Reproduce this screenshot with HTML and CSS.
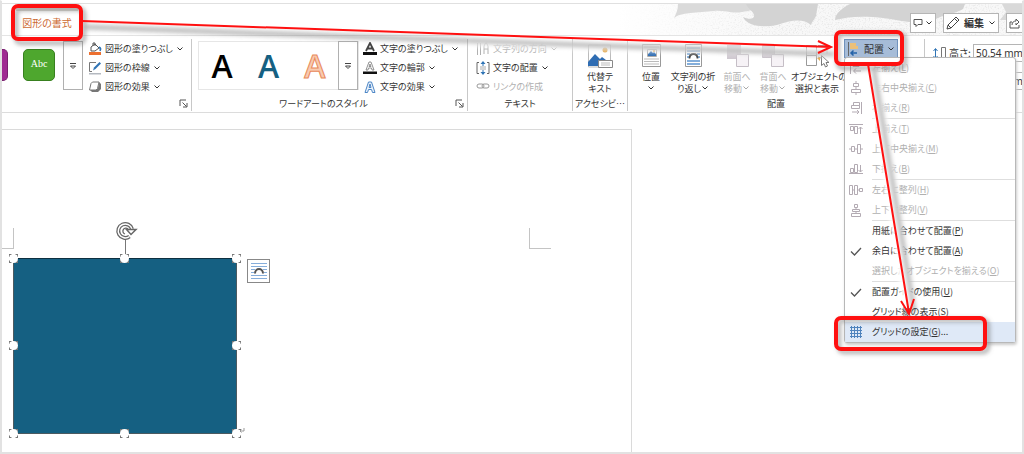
FILE: index.html
```html
<!DOCTYPE html>
<html lang="ja">
<head>
    <meta charset="UTF-8">
    <meta name="viewport" content="width=device-width, initial-scale=1.0">
    <title>図形の書式</title>
    <link rel="stylesheet" href="styles.css">
</head>
<body>

<svg class="defs" aria-hidden="true">
    <symbol id="chevron" viewBox="0 0 8 8"><path d="M1.500 2.500 4 5l2.500-2.500" fill="none" stroke="currentColor"/></symbol>
    <symbol id="more" viewBox="0 0 8 8"><path d="M1 1.500h6M1.500 4h5L4 6.500z" fill="none" stroke="#444"/></symbol>
    <symbol id="launcher" viewBox="0 0 9 9"><path d="M1 7V1h6M3.500 3.500l4 4M8 4v4H4" fill="none" stroke="#555"/></symbol>
    <symbol id="check" viewBox="0 0 14 14"><path d="M2 7.500 5.500 11 12 4" fill="none" stroke="#555" stroke-width="1.300"/></symbol>
</svg>

<div class="app">
    <header class="title-bar">
        <svg class="swoosh" viewBox="0 0 404 31" preserveAspectRatio="xMaxYMin slice" aria-hidden="true">
            <defs>
                <filter id="grain"><feTurbulence type="fractalNoise" baseFrequency="0.700" numOctaves="2"/><feColorMatrix values="0 0 0 0 .6  0 0 0 0 .6  0 0 0 0 .6  0 0 0 1.200 -.58"/></filter>
                <linearGradient id="fade"><stop offset="0" stop-color="#fff"/><stop offset=".4" stop-color="#fff" stop-opacity="0"/></linearGradient>
            </defs>
            <rect width="404" height="31" fill="#f8f8f8"/>
            <rect width="404" height="31" filter="url(#grain)"/>
            <rect width="404" height="31" fill="url(#fade)"/>
            <path d="M60 0h80c-3 6-8 7-16 8-10 2-18-2-28-1-8 1-16 1-24 2-8 1-12 2-16 5 2-4 4-8 4-14z" fill="#dadada"/>
            <path d="M128 0h72l-2 12c-1 3-4 5-5 9-8-7-20-5-34 0-14 3-30 1-34-8 6 3 12 2 11-2-1-4-6-6-8-11z" fill="#d3d3d3"/>
            <path d="M232 0h115l-2 5c-6 4-12 4-18 6-8 3-14 8-26 8-16-1-30-5-46-6-16-1-26 0-38 3 0-6 7-12 15-16z" fill="#d3d3d3"/>
            <path d="M404 0h-20l4 8-6 8h22z" fill="#d9d9d9"/>
        </svg>
        <button class="tab">図形の書式</button>
        <div class="title-actions">
            <button class="outline-btn" aria-label="コメント">
                <svg width="10" height="10" viewBox="0 0 10 10"><path d="M1 1.500h8v5H5L3 8.500v-2H1z" fill="none" stroke="#555"/></svg>
                <svg class="chev"><use href="#chevron"/></svg>
            </button>
            <button class="outline-btn edit">
                <svg width="14" height="14" viewBox="0 0 14 14"><path d="M1 13l1-4 8-8 3 3-8 8zM8.500 2.500l3 3M2 9l3 3" fill="none" stroke="#444"/></svg>
                編集
                <svg class="chev"><use href="#chevron"/></svg>
            </button>
            <button class="outline-btn share" aria-label="共有">
                <svg width="11" height="11" viewBox="0 0 11 11"><path d="M3 4H1v6h9V7M3 7c0-3 2-4 4-4V1l3 3-3 3V5" fill="none" stroke="#555"/></svg>
            </button>
        </div>
    </header>

    <div class="ribbon">
        <section class="group styles">
            <div class="group-body">
                <span class="swatch purple"></span>
                <span class="swatch green">Abc</span>
                <button class="more" aria-label="図形のスタイル"><svg><use href="#more"/></svg></button>
                <div class="commands">
                    <button class="cmd">
                        <svg class="icon" viewBox="0 0 14 14"><path d="M3 5l4-3 4 4-4 3H3zM5 4V1h2v3" fill="#fff" stroke="#555"/><path d="M11 5c2 1 2 2 1 4" fill="none" stroke="#2f74b5" stroke-width="1.500"/><path d="M1 10h12v3H1z" fill="#ed7030"/></svg>
                        図形の塗りつぶし<svg class="chev"><use href="#chevron"/></svg>
                    </button>
                    <button class="cmd">
                        <svg class="icon" viewBox="0 0 14 14"><path d="M8 1.500H1.500v9H4" fill="none" stroke="#777"/><path d="M5 9.500l1-3L11.500 1 13 2.500 7.500 8z" fill="#2f74b5"/><path d="M1 12h12v1.500H1z" fill="#b4b9c0"/></svg>
                        図形の枠線<svg class="chev"><use href="#chevron"/></svg>
                    </button>
                    <button class="cmd">
                        <svg class="icon" viewBox="0 0 14 14"><path d="M2 10l2 2h6l3-3V4l-2-2-1 6-2 2z" fill="#777"/><path d="M4.500 2H11L9.500 8.500 8 10H1.500L3 3.500z" fill="#fff" stroke="#777"/></svg>
                        図形の効果<svg class="chev"><use href="#chevron"/></svg>
                    </button>
                </div>
            </div>
            <div class="group-foot"><span></span><button class="launcher" aria-label="図形の詳細"><svg><use href="#launcher"/></svg></button></div>
        </section>

        <section class="group wordart">
            <div class="group-body">
                <div class="gallery">
                    <span class="art black">A</span>
                    <span class="art blue">A</span>
                    <span class="art orange">A</span>
                    <button class="more" aria-label="その他のスタイル"><svg><use href="#more"/></svg></button>
                </div>
                <div class="commands">
                    <button class="cmd">
                        <svg class="icon" viewBox="0 0 14 14"><path d="M3 9l4-8 4 8M4.500 6.500h5" fill="none" stroke="#444" stroke-width="1.800"/><path d="M0 10h14v3H0z" fill="#111"/></svg>
                        文字の塗りつぶし<svg class="chev"><use href="#chevron"/></svg>
                    </button>
                    <button class="cmd">
                        <svg class="icon" viewBox="0 0 14 14"><path d="M3 9l3-8h2l3 8H9L8.500 7h-3L5 9zM6 5.500h2L7 3z" fill="#fff" stroke="#777" stroke-width=".8"/><path d="M0 10.500h14v2.500H0z" fill="#111"/></svg>
                        文字の輪郭<svg class="chev"><use href="#chevron"/></svg>
                    </button>
                    <button class="cmd">
                        <svg class="icon" viewBox="0 0 14 14"><path d="M2 12.500L5.500 2h3L12 12.500H9.500l-1-3h-3l-1 3zM6 7.500h2L7 4z" fill="#eaf2fb" stroke="#4c86c6"/></svg>
                        文字の効果<svg class="chev"><use href="#chevron"/></svg>
                    </button>
                </div>
            </div>
            <div class="group-foot"><span>ワードアートのスタイル</span><button class="launcher" aria-label="文字の詳細"><svg><use href="#launcher"/></svg></button></div>
        </section>

        <section class="group text">
            <div class="group-body">
                <div class="commands">
                    <button class="cmd" disabled>
                        <svg class="icon" viewBox="0 0 14 14"><path d="M1.500 1v12M4.500 1v12M8 12V4l1.500-3h1L12 4v8M8 7h4" fill="none" stroke="currentColor"/></svg>
                        文字列の方向<svg class="chev"><use href="#chevron"/></svg>
                    </button>
                    <button class="cmd">
                        <svg class="icon" viewBox="0 0 14 14"><path d="M3 1.500H1v11h2M11 1.500h2v11h-2" fill="none" stroke="#666"/><path d="M7 0l2.500 3h-5zM7 14l2.500-3h-5zM6.500 3h1v2h-1zM6.500 9h1v2h-1z" fill="#2f74b5"/><path d="M4 6h6M4 8h6" stroke="#aaa"/></svg>
                        文字の配置<svg class="chev"><use href="#chevron"/></svg>
                    </button>
                    <button class="cmd" disabled>
                        <svg class="icon" viewBox="0 0 14 14"><rect x="1" y="4" width="7" height="4" rx="2" fill="none" stroke="#999"/><rect x="6" y="4" width="7" height="4" rx="2" fill="none" stroke="#999"/></svg>
                        リンクの作成
                    </button>
                </div>
            </div>
            <div class="group-foot"><span>テキスト</span></div>
        </section>

        <section class="group access">
            <div class="group-body">
                <button class="big">
                    <svg viewBox="0 0 26 26"><path d="M1.500 2h22v22h-22z" fill="#fff" stroke="#bbb"/><circle cx="18" cy="7" r="2.500" fill="#e3a23c"/><path d="M1 23v-4l7-8 5 5 2-2 4 3v6z" fill="#2f6db3"/><path d="M11.500 17.500h14v7h-14z" fill="#fff" stroke="#888"/><path d="M14 20h9M14 22h9" stroke="#bbb"/></svg>
                    代替テ<br>キスト
                </button>
            </div>
            <div class="group-foot"><span>アクセシビ…</span></div>
        </section>

        <section class="group arrange">
            <div class="group-body">
                <button class="big narrow">
                    <svg viewBox="0 0 26 26"><path d="M4.500 1.500h18v22h-18z" fill="#fff" stroke="#999"/><path d="M6 4h15M6 16h15M6 18.500h15M6 21h15" stroke="#bbb"/><path d="M9.500 6.500h9v7h-9z" fill="#fff" stroke="#aaa"/><path d="M10 13v-2l3-3 2 2 1-1 2 2v2z" fill="#2f6db3"/><circle cx="16" cy="8" r="1" fill="#e3a23c"/></svg>
                    位置<br><svg class="chev"><use href="#chevron"/></svg>
                </button>
                <button class="big wide">
                    <svg viewBox="0 0 26 26"><path d="M5.500 1.500h16v22h-16z" fill="#fff" stroke="#999"/><path d="M7 5h13M7 8h13M7 11h3M17 11h3M7 14h2M18 14h2M7 18h13M7 21h13" stroke="#5b94cf" stroke-width="1.500"/><path d="M9.500 15.500c0-6 8-6 8 0" fill="none" stroke="#444" stroke-width="1.800"/></svg>
                    文字列の折<br>り返し<svg class="chev"><use href="#chevron"/></svg>
                </button>
                <button class="big" disabled>
                    <svg viewBox="0 0 26 26"><path d="M3 2h14v14H3z" fill="#cfc8d0"/><path d="M12.500 11.500h12v12h-12z" fill="#f6f2f6" stroke="#c5bec6"/></svg>
                    前面へ<br>移動<svg class="chev"><use href="#chevron"/></svg>
                </button>
                <button class="big" disabled>
                    <svg viewBox="0 0 26 26"><path d="M2.500 2.500h12v12h-12z" fill="#cfc8d0" stroke="#c5bec6"/><path d="M11.500 11.500h12v12h-12z" fill="#f6f2f6" stroke="#c5bec6"/></svg>
                    背面へ<br>移動<svg class="chev"><use href="#chevron"/></svg>
                </button>
                <button class="big wide">
                    <svg viewBox="0 0 26 26"><path d="M2.500 2.500h10v20h-10zM2.500 12.500h10" fill="#fff" stroke="#999"/><path d="M14 2.500h9v8M14 14l3 1" fill="none" stroke="#999"/><path d="M13 15l3-1v4z" fill="#e3a23c"/><path d="M17.500 12.500v10l2.500-2 1.500 3.500 2-1-1.500-3.500h3z" fill="#fff" stroke="#777"/></svg>
                    オブジェクトの<br>選択と表示
                </button>

                <div class="dropdown">
                    <button class="align-btn" aria-expanded="true">
                        <svg class="icon" viewBox="0 0 14 14"><path d="M1.500 0v14" stroke="#666"/><path d="M3 1h6v3H3zM3 4h8v3H3z" fill="#ecc079"/><path d="M10 11H4M6.500 8.500L4 11l2.500 2.500" fill="none" stroke="#2563a8" stroke-width="1.500"/></svg>
                        配置<svg class="chev"><use href="#chevron"/></svg>
                    </button>
                    <ul class="menu">
                        <li><button disabled><svg class="icon" viewBox="0 0 14 14"><path d="M1.500 1v12M4 2.500h6v3H4zM12 10H5M7 7.500L4.500 10 7 12.500" /></svg>左揃え(<u>L</u>)</button></li>
                        <li><button disabled><svg class="icon" viewBox="0 0 14 14"><path d="M7 0v2M7 6v2M7 12v2M4.500 2.500h5v3h-5zM2.500 8.500h9v3h-9z"/></svg>左右中央揃え(<u>C</u>)</button></li>
                        <li><button disabled><svg class="icon" viewBox="0 0 14 14"><path d="M12.500 1v12M4.500 1.500h6v3h-6zM2.500 4.500h8v3h-8zM3 11h7M8 9l2 2-2 2"/></svg>右揃え(<u>R</u>)</button></li>
                        <li class="sep"><button disabled><svg class="icon" viewBox="0 0 14 14"><path d="M0 2.500h14M1.500 4.500h3v4h-3zM5.500 4.500h3v7h-3zM11.500 12V5M9.500 7l2-2 2 2"/></svg>上揃え(<u>T</u>)</button></li>
                        <li><button disabled><svg class="icon" viewBox="0 0 14 14"><path d="M0 7h2M6 7h2M12 7h2M2.500 4.500h3v5h-3zM8.500 2.500h3v9h-3z"/></svg>上下中央揃え(<u>M</u>)</button></li>
                        <li><button disabled><svg class="icon" viewBox="0 0 14 14"><path d="M0 11.500h14M1.500 6.500h3v4h-3zM5.500 2.500h3v8h-3zM11.500 3v7M9.500 8l2 2 2-2"/></svg>下揃え(<u>B</u>)</button></li>
                        <li class="sep"><button disabled><svg class="icon" viewBox="0 0 14 14"><path d="M.5 2.500h3v9h-3zM5.500 2.500h3v9h-3zM10.500 5.500h3v3h-3zM3 7h3M8 7h3"/></svg>左右に整列(<u>H</u>)</button></li>
                        <li><button disabled><svg class="icon" viewBox="0 0 14 14"><path d="M5.500 1.500h3v3h-3zM3.500 6.500h7v2h-7zM2.500 10.500h9v3h-9zM7 4v2M7 8v2"/></svg>上下に整列(<u>V</u>)</button></li>
                        <li class="sep"><button><span class="icon"></span>用紙に合わせて配置(<u>P</u>)</button></li>
                        <li><button><svg class="icon"><use href="#check"/></svg>余白に合わせて配置(<u>A</u>)</button></li>
                        <li><button disabled><span class="icon"></span>選択したオブジェクトを揃える(<u>O</u>)</button></li>
                        <li class="sep"><button><svg class="icon"><use href="#check"/></svg>配置ガイドの使用(<u>U</u>)</button></li>
                        <li><button><span class="icon"></span>グリッド線の表示(<u>S</u>)</button></li>
                        <li><button class="selected"><svg class="icon grid" viewBox="0 0 14 14"><path d="M2.500 1v12M5.500 1v12M8.500 1v12M11.500 1v12M1 2.500h12M1 5.500h12M1 8.500h12M1 11.500h12"/></svg>グリッドの設定(<u>G</u>)...</button></li>
                    </ul>
                </div>
            </div>
            <div class="group-foot"><span>配置</span></div>
        </section>

        <section class="group size">
            <div class="field">
                <svg class="icon" viewBox="0 0 14 14"><path d="M2.500 3v9M.5 5l2-2.500 2 2.500M.5 10l2 2.500 2-2.500" fill="none" stroke="#2f74b5"/><path d="M8.500 1.500h4v12h-4z" fill="none" stroke="#777"/></svg>
                <label for="height">高さ:</label>
                <input id="height" type="text" value="50.54 mm">
            </div>
            <div class="field">
                <span class="icon"></span>
                <label for="width">幅:</label>
                <input id="width" type="text" value="50.54 mm">
            </div>
        </section>
    </div>

    <main class="document">
        <div class="page">
            <span class="crop left"></span>
            <span class="crop right"></span>
            <div class="shape">
                <span class="stem"></span>
                <svg class="rotate" viewBox="0 0 24 20" aria-hidden="true"><path d="M14.500 15.500A7 7 0 1 1 17 8" fill="none" stroke="#666" stroke-width="4"/><path d="M14.500 15.500A7 7 0 1 1 17 8" fill="none" stroke="#fff" stroke-width="1.500"/><path d="M10 13a3 3 0 1 1 3-5" fill="none" stroke="#666" stroke-width="1.300"/><path d="M11.500 8.500h9.500l-5 5z" fill="#fff" stroke="#666" stroke-width="1.500"/></svg>
                <i class="handle n w"></i><i class="handle n c"></i><i class="handle n e"></i>
                <i class="handle m w"></i><i class="handle m e"></i>
                <i class="handle s w"></i><i class="handle s c"></i><i class="handle s e"></i>
                <button class="layout-options" aria-label="レイアウト オプション">
                    <svg viewBox="0 0 18 18"><path d="M1 1.500h16M1 4.500h16M1 7.500h4M13 7.500h4M1 10.500h3M14 10.500h3M1 13.500h16M1 16.500h16" stroke="#86aedb"/><path d="M5 11.500c0-6 8-6 8 0" fill="none" stroke="#555" stroke-width="2"/></svg>
                </button>
                <svg class="para-mark" viewBox="0 0 6 6" aria-hidden="true"><path d="M5 1v3H1M2.500 2.500L1 4l1.500 1.500" fill="none" stroke="#999"/></svg>
            </div>
        </div>
    </main>
</div>

<!-- 操作手順の赤枠と矢印 -->
<svg class="annotations" width="1024" height="454" viewBox="0 0 1024 454" aria-hidden="true">
    <defs>
        <filter id="soft" filterUnits="userSpaceOnUse" x="0" y="0" width="1024" height="454"><feGaussianBlur stdDeviation="2"/></filter>
    </defs>
    <g fill="none" filter="url(#soft)">
        <path d="M470 42L836 53" stroke="#fff" stroke-width="9" opacity=".8"/>
        <path d="M873 68L909 306" stroke="#fff" stroke-width="12"/>
        <path d="M86 27L834 54M874 70L914 312" stroke="#777" stroke-width="5" opacity=".5"/>
        <g stroke="#777" stroke-width="4" opacity=".6">
            <rect x="16" y="9" width="68" height="34" rx="5"/>
            <rect x="838" y="34" width="67" height="34" rx="5"/>
            <rect x="839" y="320" width="149" height="32" rx="5"/>
        </g>
    </g>
    <g fill="none" stroke="#ff1010">
        <g stroke-width="4">
            <rect x="13" y="6" width="68" height="33" rx="5"/>
            <rect x="836" y="32" width="66" height="32" rx="5"/>
            <rect x="836" y="318" width="149" height="31" rx="5"/>
        </g>
        <path d="M82 21L831 47M818 41l13 6-13 6" stroke-width="2"/>
        <path d="M868 64L909 313M901 301l8 13 5-15" stroke-width="2"/>
    </g>
</svg>

</body>
</html>
```

FILE: styles.css
```css
* {
    box-sizing: border-box;
}

body {
    margin: 0;
    font-family: "Noto Sans CJK JP", sans-serif;
    font-size: 9px;
    font-feature-settings: "palt";
    line-height: 12px;
    color: #333;
    background-color: #fff;
    position: relative;
    overflow: hidden;
}

button,
input {
    font: inherit;
    font-feature-settings: inherit;
    color: inherit;
    background: none;
    border: none;
    padding: 0;
    margin: 0;
    white-space: nowrap;
}

button:disabled {
    color: #b0b0b0;
}

svg {
    flex: none;
}

.defs {
    position: absolute;
    width: 0;
    height: 0;
}

.icon {
    width: 14px;
    height: 14px;
    flex: none;
}

.chev {
    width: 8px;
    height: 8px;
}

.app {
    display: flex;
    flex-direction: column;
    height: 100vh;
    border: 2px solid #e2e2e2;
    border-top: 1px solid #fff;
}

/* タイトルバー */
.title-bar {
    position: relative;
    display: flex;
    justify-content: space-between;
    height: 33px;
    margin-top: 2px;
    border-top: 1px solid #e0e0e0;
    border-bottom: 1px solid #e4e4e4;
}

.swoosh {
    position: absolute;
    top: 0;
    right: 0;
    width: 404px;
    height: 31px;
}

.tab {
    margin: 3px 0 0 14px;
    padding: 0 6px;
    border-top: 4px solid #d8d6d0;
    color: #cc6a33;
    font-size: 10px;
    width: 62px;
    height: 28px;
}

.title-actions {
    position: relative;
    display: flex;
    gap: 7px;
    padding-top: 9px;
}

.outline-btn {
    display: flex;
    align-items: center;
    justify-content: center;
    gap: 2px;
    width: 26px;
    height: 20px;
    border: 1px solid #b5b5b5;
    background-color: #fff;
}

.edit {
    width: 56px;
    gap: 4px;
    font-size: 10px;
    font-weight: 700;
}

.share {
    width: 16px;
    border-right: none;
}

/* リボン */
.ribbon {
    display: flex;
    height: 77px;
    padding-top: 3px;
    border-bottom: 1px solid #dcdcdc;
}

.group {
    display: flex;
    flex-direction: column;
    flex: none;
    border-right: 1px solid #c8c8c8;
    margin-bottom: 1px;
}

.group-body {
    display: flex;
    height: 57px;
}

.group-foot {
    display: flex;
    align-items: center;
    height: 15px;
}

.group-foot span {
    flex: 1;
    text-align: center;
    white-space: nowrap;
}

.launcher {
    width: 12px;
    height: 12px;
}

.launcher svg {
    display: block;
    width: 9px;
    height: 9px;
}

.styles {
    width: 190px;
}

.wordart {
    width: 276px;
}

.text {
    width: 105px;
}

.access {
    width: 55px;
}

.arrange {
    flex: 1;
}

.size {
    width: 97px;
    padding: 5px 0 0 8px;
    gap: 10px;
    border-right: none;
    overflow: hidden;
}

.swatch {
    height: 32px;
    margin-top: 10px;
    font-family: "Liberation Serif", serif;
    font-size: 10px;
    color: #fff;
    text-align: center;
    line-height: 28px;
}

.purple {
    width: 6px;
    border-radius: 0 5px 5px 0;
    background-color: #a02b93;
    border: 1px solid #7a1f70;
    border-left: none;
}

.green {
    width: 32px;
    margin-left: 15px;
    margin-right: 8px;
    border: 1px solid #38801f;
    border-radius: 5px;
    background-color: #4ea72e;
}

.more {
    display: flex;
    align-items: center;
    justify-content: center;
    width: 20px;
    height: 49px;
    margin-top: 2px;
    border: 1px solid #b0b0b0;
}

.more svg {
    width: 8px;
    height: 8px;
}

.commands {
    display: flex;
    flex-direction: column;
    margin-left: 5px;
}

.text .commands {
    margin-left: 8px;
}

.cmd {
    display: flex;
    align-items: center;
    gap: 3px;
    height: 19px;
}

.gallery {
    display: flex;
    align-items: center;
    width: 161px;
    height: 49px;
    margin: 2px 0 0 6px;
    border: 1px solid #e6e6e6;
}

.gallery .more {
    margin: 0;
}

.wordart .commands {
    margin-left: 4px;
}

.art {
    flex: 1;
    text-align: center;
    font-family: "Open Sans", sans-serif;
    font-size: 32px;
    font-weight: 600;
    line-height: 50px;
}

.black {
    color: #000;
}

.blue {
    color: #156082;
}

.orange {
    color: #f8cbb0;
    -webkit-text-stroke: 1px #e98a5b;
}

.big {
    width: 36px;
    padding-top: 2px;
    text-align: center;
}

.big > svg:first-child {
    display: block;
    width: 26px;
    height: 26px;
    margin: 0 auto 2px;
}

.big:disabled .chev {
    color: #aaa;
}

.access .big {
    width: 100%;
}

.arrange .group-body {
    padding-left: 7px;
}

.arrange .narrow {
    width: 32px;
}

.arrange .wide {
    width: 52px;
}

/* 配置メニュー */
.dropdown {
    position: relative;
    margin-left: 1px;
}

.align-btn {
    display: flex;
    align-items: center;
    gap: 3px;
    width: 54px;
    height: 19px;
    padding-left: 2px;
    border: 1px solid #7193bd;
    background-color: #a6bcd8;
    font-size: 10px;
}

.menu {
    position: absolute;
    top: 18px;
    left: 0;
    z-index: 1;
    width: 172px;
    margin: 0;
    padding: 0;
    list-style: none;
    background-color: #fff;
    border: 1px solid #b8b8b8;
    border-radius: 3px;
    box-shadow: 1px 2px 3px #ccc;
}

.menu button {
    display: flex;
    align-items: center;
    width: 100%;
    height: 20px;
    padding-left: 4px;
}

.menu .icon {
    margin-right: 9px;
    fill: none;
    stroke: #b3abb3;
}

.menu .grid {
    stroke: #4f83bd;
}

.menu .selected {
    background-color: #dfe9f7;
}

.sep::before {
    content: "";
    display: block;
    height: 1px;
    margin-left: 27px;
    background-color: #dedede;
}

.field {
    display: flex;
    align-items: center;
    gap: 2px;
    height: 18px;
}

.field label {
    width: 22px;
    font-size: 10px;
    white-space: nowrap;
}

.field input {
    flex: 1;
    min-width: 0;
    height: 18px;
    padding-left: 2px;
    border: 1px solid #b5b5b5;
    border-right: none;
    font-family: "Noto Sans", sans-serif;
    font-size: 10px;
}

/* 文書 */
.document {
    flex: 1;
    display: flex;
    padding-top: 16px;
    min-height: 0;
}

.page {
    position: relative;
    width: 630px;
    border-top: 1px solid #dadada;
    border-right: 1px solid #dadada;
}

.crop {
    position: absolute;
    top: 98px;
    height: 21px;
    border-bottom: 1px solid #c4c4c4;
}

.left {
    left: 0;
    width: 12px;
    border-right: 1px solid #c4c4c4;
}

.right {
    left: 527px;
    width: 22px;
    border-left: 1px solid #c4c4c4;
}

.shape {
    position: absolute;
    top: 128px;
    left: 11px;
    width: 224px;
    height: 176px;
    background-color: #156082;
    border: 1px solid #4c5a60;
    border-top-color: #0d2f40;
}

/* 四隅の括弧の上に白い丸を重ねる */
.handle {
    position: absolute;
    width: 9px;
    height: 9px;
    border: 1px dashed #777;
}

.handle::after {
    content: "";
    position: absolute;
    inset: -1px;
    border-radius: 50%;
    background-color: #fff;
}

.n { top: -5px; }
.m { top: calc(50% - 5px); }
.s { bottom: -5px; }
.w { left: -5px; }
.c { left: calc(50% - 5px); }
.e { right: -5px; }

.stem {
    position: absolute;
    top: -20px;
    left: 50%;
    height: 18px;
    border-left: 1px solid #777;
}

.rotate {
    position: absolute;
    top: -38px;
    left: calc(50% - 10px);
    width: 24px;
    height: 20px;
}

.layout-options {
    position: absolute;
    top: 0;
    left: 233px;
    width: 23px;
    height: 24px;
    border: 1px solid #888;
    background-color: #fff;
    display: grid;
    place-items: center;
}

.layout-options svg {
    width: 18px;
    height: 18px;
}

.para-mark {
    position: absolute;
    right: -9px;
    bottom: 0;
    width: 6px;
    height: 6px;
}

.annotations {
    position: absolute;
    top: 0;
    left: 0;
    z-index: 2;
    pointer-events: none;
}
```
